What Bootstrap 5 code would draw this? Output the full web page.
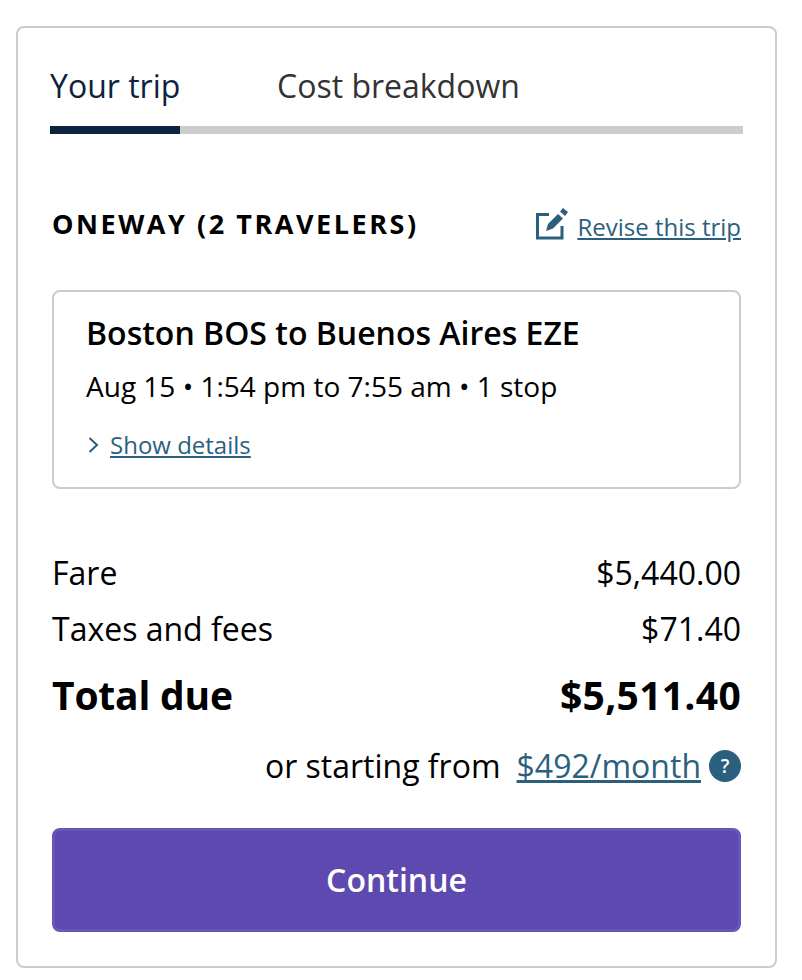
<!DOCTYPE html>
<html lang="en"><head><meta charset="utf-8"><title>Trip summary</title>
<link href="https://cdn.jsdelivr.net/npm/bootstrap@5.3.0/dist/css/bootstrap.min.css" rel="stylesheet">
<style>
html,body{background:#fff;}
body{font-family:"Open Sans",sans-serif;color:#000;padding:26px 25px 0 16px;height:980px;overflow:hidden;}
.trip-box{border:2px solid #ccc;border-radius:8px;height:942px;padding:0 34px 0 32px;}
.tab-row{height:106px;border-bottom:8px solid #ccc;width:693px;}
.tab-item{font-size:32px;line-height:40px;padding-top:38px;color:#333;text-decoration:none;height:106px;display:block;white-space:nowrap;}
.tab-item.is-on{color:#0c2340;width:130px;border-bottom:8px solid #0c2340;}
.tab-gap{margin-left:97px;}
.head-row{margin-top:72px;margin-left:2px;height:60px;}
.head-title{font-size:27px;font-weight:700;letter-spacing:2.55px;line-height:36px;}
.teal-link{color:#2b5f7e;text-decoration:underline;}
.revise{font-size:24px;line-height:32px;}
.revise a{margin-bottom:-3px;}
.flight-box{margin-left:2px;border:2px solid #ccc;border-radius:8px;height:199px;padding:21px 32px;margin-top:24px;}
.flight-title{font-size:32px;font-weight:600;line-height:40px;}
.flight-sub{font-size:28px;line-height:36px;margin-top:15px;}
.flight-more{font-size:24px;line-height:32px;margin-top:25px;gap:10px;}
.price-row{margin-left:2px;font-size:32px;line-height:40px;}
.fare-line{margin-top:64px;}
.tax-line{margin-top:16px;}
.price-total{font-size:39px;font-weight:700;line-height:48px;margin-top:22px;}
.total-word{letter-spacing:-.2px;}
.total-sum{letter-spacing:.3px;}
.from-row{font-size:32px;line-height:40px;margin-top:27px;}
.q-mark{width:32px;height:32px;border-radius:50%;background:#2b5f7e;color:#fff;font-size:19px;font-weight:600;line-height:32px;text-align:center;}
.go-btn{margin-left:2px;margin-top:42px;height:104px;width:689px;background:#5e49b0;border:3px solid #6a55b8;border-radius:8px;color:#fff;font-size:32px;font-weight:600;}
.go-btn:hover{background:#5e49b0;color:#fff;border-color:#6a55b8;}
</style></head><body>
<div class="trip-box">
  <div class="d-flex tab-row">
    <a href="#" class="tab-item is-on">Your trip</a>
    <a href="#" class="tab-item tab-gap">Cost breakdown</a>
  </div>
  <div class="d-flex justify-content-between align-items-start head-row">
    <div class="head-title">ONEWAY (2 TRAVELERS)</div>
    <div class="d-flex align-items-end gap-2 revise">
      <svg width="34" height="34" viewBox="0 0 34 34" fill="none" aria-hidden="true"><path d="M14 8.5H2.5V32H27V20" stroke="#2b5f7e" stroke-width="3"/><path d="M11 25l2-7L23 8l5 4.500L18 22.500z" fill="#2b5f7e"/><path d="M25 5.500l3-3.500 5 4-3 4z" fill="#2b5f7e"/></svg>
      <a href="#" class="teal-link">Revise this trip</a>
    </div>
  </div>
  <div class="flight-box">
    <div class="flight-title">Boston BOS to Buenos Aires EZE</div>
    <div class="flight-sub">Aug 15 • 1:54 pm to 7:55 am • 1 stop</div>
    <div class="d-flex align-items-center flight-more">
      <svg width="14" height="20" viewBox="0 0 14 20" fill="none" aria-hidden="true"><path d="M3.500 3l7.500 7-7.500 7" stroke="#2b5f7e" stroke-width="2"/></svg>
      <a href="#" class="teal-link">Show details</a>
    </div>
  </div>
  <div class="d-flex justify-content-between price-row fare-line"><span>Fare</span><span>$5,440.00</span></div>
  <div class="d-flex justify-content-between price-row tax-line"><span>Taxes and fees</span><span>$71.40</span></div>
  <div class="d-flex justify-content-between price-row price-total"><span class="total-word">Total due</span><span class="total-sum">$5,511.40</span></div>
  <div class="d-flex justify-content-end align-items-center from-row">
    <span>or starting from</span>
    <a href="#" class="teal-link ms-3">$492/month</a>
    <span class="q-mark ms-2">?</span>
  </div>
  <button type="button" class="btn go-btn d-block">Continue</button>
</div>
<script src="https://cdn.jsdelivr.net/npm/bootstrap@5.3.0/dist/js/bootstrap.bundle.min.js"></script>
</body></html>
